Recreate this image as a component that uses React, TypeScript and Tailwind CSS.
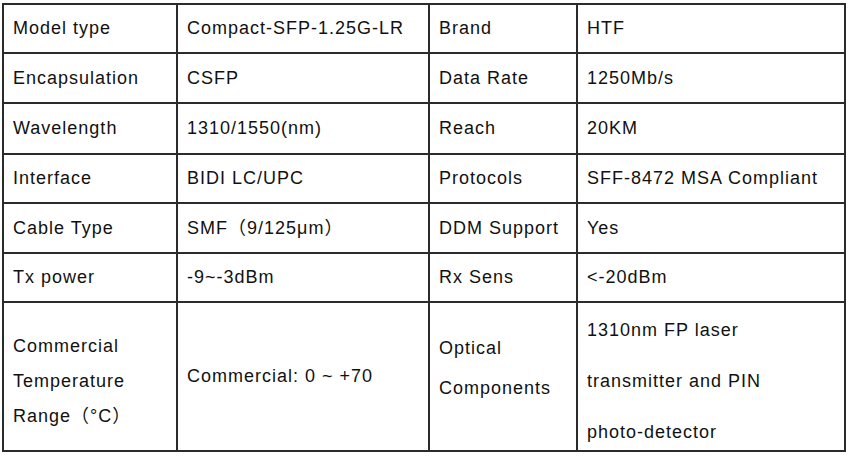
import React from "react";

const rows: [string, string, string, string][] = [
  ["Model type", "Compact-SFP-1.25G-LR", "Brand", "HTF"],
  ["Encapsulation", "CSFP", "Data Rate", "1250Mb/s"],
  ["Wavelength", "1310/1550(nm)", "Reach", "20KM"],
  ["Interface", "BIDI LC/UPC", "Protocols", "SFF-8472 MSA Compliant"],
  ["Cable Type", "SMF（9/125μm）", "DDM Support", "Yes"],
  ["Tx power", "-9~-3dBm", "Rx Sens", "<-20dBm"],
];

function Cell({ children, className = "" }: { children: React.ReactNode; className?: string }) {
  return <div className={`bg-white flex items-center pl-[9px] ${className}`}>{children}</div>;
}

export default function App() {
  return (
    <div className="w-[850px] h-[458px] bg-white pt-[3px] pl-[2px] text-[#111111]" style={{ fontFamily: '"Liberation Sans", Arial, "Noto Sans CJK SC", sans-serif' }}>
      <div className="grid w-[844px] grid-cols-[172px_250px_146px_266px] grid-rows-[47px_48px_49px_47px_48px_47px_147px] gap-[2px] p-[2px] bg-[#2b2b2b] text-[18px] tracking-[1px]">
        {rows.map((r, i) => (
          <React.Fragment key={i}>
            <Cell>{r[0]}</Cell>
            <Cell>{r[1]}</Cell>
            <Cell>{r[2]}</Cell>
            <Cell>{r[3]}</Cell>
          </React.Fragment>
        ))}
        <Cell className="leading-[35px]">
          <div className="pt-[10px]">
            Commercial
            <br />
            Temperature
            <br />
            Range（°C）
          </div>
        </Cell>
        <Cell>Commercial: 0 ~ +70</Cell>
        <Cell className="leading-[40px]">
          <div className="pb-[18px]">
            Optical
            <br />
            Components
          </div>
        </Cell>
        <Cell className="leading-[51px]">
          <div className="pt-[10px]">
            1310nm FP laser
            <br />
            transmitter and PIN
            <br />
            photo-detector
          </div>
        </Cell>
      </div>
    </div>
  );
}
